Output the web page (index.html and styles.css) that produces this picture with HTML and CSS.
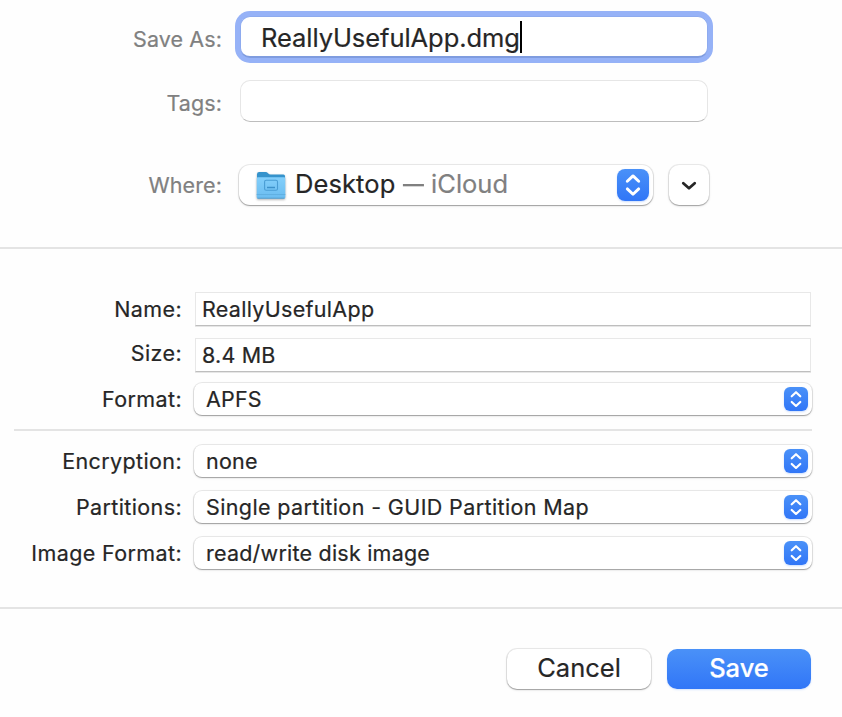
FILE: index.html
```html
<!DOCTYPE html>
<html lang="en">
<head>
<meta charset="utf-8">
<title>Save Disk Image</title>
<link rel="stylesheet" href="styles.css">
</head>
<body>
<svg width="0" height="0" class="defs" aria-hidden="true">
  <symbol id="updown" viewBox="0 0 32 32"><path d="M10.3 12.3 16 6.9l5.7 5.4M10.3 19.9 16 25.3l5.7-5.4" fill="none" stroke="#fff" stroke-width="2.9" stroke-linecap="round" stroke-linejoin="round"/></symbol>
</svg>
<main class="dialog">
  <section class="location">
    <div class="row row-save">
      <span class="label"><span class="t-saveas">Save As:</span></span>
      <div class="field focused"><span class="t-file">ReallyUsefulApp.dmg</span><i class="caret"></i></div>
    </div>
    <div class="row row-tags">
      <span class="label"><span class="t-tags">Tags:</span></span>
      <div class="field"></div>
    </div>
    <div class="row row-where">
      <span class="label"><span class="t-where">Where:</span></span>
      <div class="popup large">
        <svg class="folder" width="32" height="32" viewBox="0 0 32 32">
          <defs>
            <linearGradient id="front" x1="0" y1="0" x2="0" y2="1"><stop offset="0" stop-color="#83cffb"/><stop offset="1" stop-color="#6abcf0"/></linearGradient>
          </defs>
          <path d="M2 5.200Q2 3 4.200 3H10.500Q12 3 13 4.200T15.500 5.400H28.500Q30 5.400 30 7.200V12H2Z" fill="#3593cc"/>
          <path d="M1.700 9.500Q1.700 8.300 3 8.300H29Q30.300 8.300 30.300 9.500V28Q30.300 29.500 29 29.500H3Q1.700 29.500 1.700 28Z" fill="url(#front)"/>
          <path d="M1.700 25.500H30.300" stroke="#60b0e2"/>
          <path d="M2.500 29.200H29.500" stroke="#559fce"/>
          <rect x="9.600" y="11.300" width="12.900" height="9.900" rx="1.500" fill="none" stroke="#4a9dd4" stroke-width="1.100"/>
          <path d="M12 18.500H20" stroke="#3d91ca" stroke-width="1.500"/>
        </svg>
        <span class="t-desktop">Desktop</span>
        <span class="t-cloud"><span class="dash">—</span> iCloud</span>
        <span class="stepper"><svg><use href="#updown"/></svg></span>
      </div>
      <button class="expand" aria-label="Expand"><svg width="40" height="40" viewBox="0 0 40 40"><path d="m14.300 18.200 5.700 5 5.700-5" fill="none" stroke="#262626" stroke-width="2.800" stroke-linecap="round" stroke-linejoin="round"/></svg></button>
    </div>
  </section>
  <section class="options">
    <div class="row text-row">
      <span class="label"><span class="t-name">Name:</span></span>
      <div class="text"><span class="t-app">ReallyUsefulApp</span></div>
    </div>
    <div class="row text-row size-row">
      <span class="label"><span class="t-size">Size:</span></span>
      <div class="text"><span class="t-mb">8.4 MB</span></div>
    </div>
    <div class="row popup-row">
      <span class="label"><span class="t-format">Format:</span></span>
      <div class="popup"><span class="t-apfs">APFS</span><span class="stepper"><svg><use href="#updown"/></svg></span></div>
    </div>
    <hr class="rule">
    <div class="row popup-row">
      <span class="label"><span class="t-enc">Encryption:</span></span>
      <div class="popup"><span class="t-none">none</span><span class="stepper"><svg><use href="#updown"/></svg></span></div>
    </div>
    <div class="row popup-row">
      <span class="label"><span class="t-part">Partitions:</span></span>
      <div class="popup"><span class="t-guid">Single partition - GUID Partition Map</span><span class="stepper"><svg><use href="#updown"/></svg></span></div>
    </div>
    <div class="row popup-row">
      <span class="label"><span class="t-image">Image Format:</span></span>
      <div class="popup"><span class="t-rw">read/write disk image</span><span class="stepper"><svg><use href="#updown"/></svg></span></div>
    </div>
  </section>
  <footer class="actions">
    <button class="btn"><span class="t-cancel">Cancel</span></button>
    <button class="btn primary"><span class="t-save">Save</span></button>
  </footer>
</main>
</body>
</html>
```
FILE: styles.css
```css
* { box-sizing: border-box; }
body { margin: 0; background: #fefefe; color: #262626; font: 21.5px/30px Inter, "Liberation Sans", sans-serif; -webkit-text-stroke: 0.2px; }
.defs { position: absolute; }
.dialog { width: 842px; height: 717px; overflow: hidden; }
.row { display: flex; white-space: nowrap; }
.label { flex: none; text-align: right; }
.row span span, .popup > span, .btn span { display: inline-block; }

.location { height: 249px; padding-top: 16px; border-bottom: 2px solid #e4e4e4; }
.location .label { width: 222px; margin-right: 18px; color: #808080; letter-spacing: 0.1px; }
.row-save { height: 42px; margin-bottom: 22px; }
.row-save .label, .row-tags .label { padding-top: 8px; }
.row-tags { height: 42px; margin-bottom: 43px; }
.field { width: 468px; height: 42px; background: #fff; border: 1px solid #e6e6e6; border-bottom-color: #bdbdbd; border-radius: 10px; }
.focused { display: flex; border: 1px solid #8eabef; border-bottom: 2px solid #7f9cdf; box-shadow: 0 0 0 5px #96b2f7; padding: 6px 0 0 20px; font-size: 25.500px; letter-spacing: -0.06px; }
.caret { width: 2px; height: 32px; margin-top: -2px; background: #000; }

.row-where { height: 40px; }
.row-where .label { margin-right: 17px; padding-top: 5px; }
.popup { display: flex; align-items: center; width: 618px; height: 32px; padding: 0 4px 0 12px; background: #fff; border-radius: 8px; box-shadow: 0 0 0 1px rgba(0,0,0,.08), 0 1px 1px rgba(0,0,0,.26), 0 1px 3px rgba(0,0,0,.1); }
.popup.large { width: 414px; height: 40px; padding: 0 4px 0 16px; border-radius: 11px; font-size: 25.500px; }
.stepper { flex: none; width: 24px; height: 24px; margin-left: auto; border-radius: 6px; background: linear-gradient(#4a91f8, #3176f7); box-shadow: 0 1px 2px rgba(49,118,247,.25); }
.stepper svg { display: block; width: 100%; height: 100%; }
.large .stepper { width: 32px; height: 32px; border-radius: 8px; }
.folder { flex: none; margin-right: 8px; filter: drop-shadow(0 1px 1px rgba(0,0,0,.3)); }
.t-desktop, .t-cloud { padding-bottom: 2px; }
.t-desktop { letter-spacing: 0.1px; }
.t-cloud { margin-left: 8px; color: #808080; }
.row span.dash { margin-right: -5px; transform: scaleX(.82); transform-origin: left; }
.expand { width: 40px; height: 40px; margin-left: 16px; padding: 0; border: 0; border-radius: 10px; background: #fff; box-shadow: 0 0 0 1px rgba(0,0,0,.07), 0 1px 1px rgba(0,0,0,.24), 0 1px 3px rgba(0,0,0,.12); }
.expand svg { display: block; }

.options { height: 360px; padding-top: 43px; border-bottom: 2px solid #e4e4e4; }
.options .label { width: 182px; margin-right: 12px; letter-spacing: 0.38px; }
.text-row { height: 34px; margin-bottom: 12px; }
.options .text-row .label { margin-right: 13px; padding-top: 2px; }
.options .size-row .label { padding-top: 0; }
.size-row { margin-bottom: 11px; }
.text { width: 616px; height: 34px; padding: 1px 0 0 6px; border: 1px solid #e8e8e8; border-bottom: 1px solid #bebebe; box-shadow: 0 1px 0 #e6e6e6; background: #fff; }
.t-app { letter-spacing: 0.3px; }
.t-mb, .t-apfs, .t-none { letter-spacing: 0.2px; }
.t-guid { letter-spacing: 0.38px; }
.t-rw { letter-spacing: 0.22px; }
.popup-row { height: 32px; margin-bottom: 14px; }
.popup-row .label { padding-top: 1px; }
.rule { width: 798px; height: 2px; margin: 0 0 14px 14px; border: 0; background: #e4e4e4; }

.actions { display: flex; justify-content: flex-end; gap: 16px; padding: 40px 31px 0 0; }
.btn { width: 144px; height: 40px; padding: 0 0 2px; border: 0; border-radius: 10px; background: #fff; color: #262626; font: 25.500px/38px Inter, "Liberation Sans", sans-serif; box-shadow: 0 0 0 1px rgba(0,0,0,.08), 0 1px 1px rgba(0,0,0,.26), 0 1px 3px rgba(0,0,0,.1); }
.primary { background: linear-gradient(#4a91f8, #3176f7); color: #fff; font-weight: 500; box-shadow: 0 1px 2px rgba(49,118,247,.2); }
```
